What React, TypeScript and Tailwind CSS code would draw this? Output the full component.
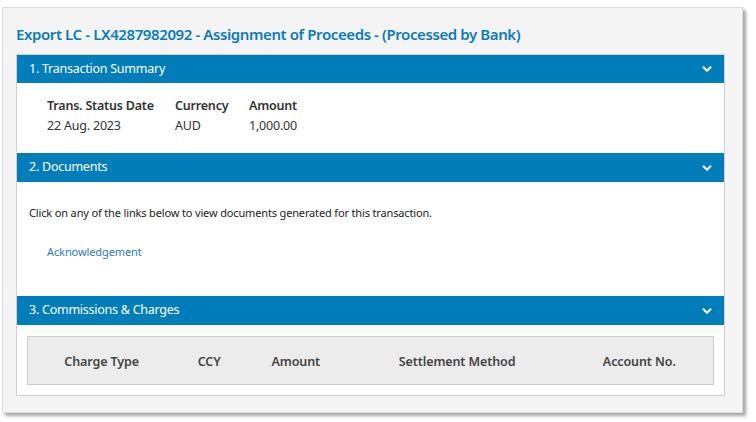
import { ChevronDown } from 'lucide-react';

const font = { fontFamily: '"Noto Sans", "Open Sans", sans-serif' };

function SectionHeader({ title, h = 'h-[29px]' }: { title: string; h?: string }) {
  return (
    <div className={`flex ${h} items-center justify-between bg-[#017dba] pl-[12px] pr-[10px] text-white`}>
      <span className="text-[12.5px] tracking-[-0.25px]">{title}</span>
      <ChevronDown size={14} strokeWidth={3.5} />
    </div>
  );
}

export default function App() {
  const charges = [
    { label: 'Charge Type', w: 'w-[148px]' },
    { label: 'CCY', w: 'w-[68px]' },
    { label: 'Amount', w: 'w-[106px]' },
    { label: 'Settlement Method', w: 'w-[218px]' },
    { label: 'Account No.', w: 'w-[148px]' },
  ];

  return (
    <div className="h-[422px] w-[756px] bg-white pl-[2px] pt-[7px] text-[#333]" style={font}>
      <div className="h-[406px] w-[741px] border border-[#dcdcdc] bg-[#f4f4f4] px-[13px] shadow-[3px_3px_3px_rgba(0,0,0,0.35)]">
        {/* Page title */}
        <h1 className="flex h-[46px] items-center pt-[6px] text-[15px] font-semibold tracking-[-0.4px] text-[#0a7bbb]">
          Export LC - LX4287982092 - Assignment of Proceeds - (Processed by Bank)
        </h1>

        <div className="w-[709px] border border-[#cfcfcf] bg-white">
          {/* 1. Transaction Summary */}
          <SectionHeader title="1. Transaction Summary" h="h-[28px]" />
          <div className="flex h-[70px] pl-[30px] pt-[14px] text-[12.5px] tracking-[-0.2px]">
            <div className="w-[128px]">
              <div className="font-semibold">Trans. Status Date</div>
              <div className="mt-[1px]">22 Aug. 2023</div>
            </div>
            <div className="w-[74px]">
              <div className="font-semibold">Currency</div>
              <div className="mt-[1px]">AUD</div>
            </div>
            <div>
              <div className="font-semibold">Amount</div>
              <div className="mt-[1px]">1,000.00</div>
            </div>
          </div>

          {/* 2. Documents */}
          <SectionHeader title="2. Documents" />
          <div className="h-[114px] pl-[12px] pt-[23px] text-[11px] text-[#222]">
            <p className="tracking-[-0.15px]">Click on any of the links below to view documents generated for this transaction.</p>
            <a className="mt-[22px] ml-[18px] block tracking-[-0.1px] text-[#2a7ab8]" href="#">
              Acknowledgement
            </a>
          </div>

          {/* 3. Commissions & Charges */}
          <SectionHeader title="3. Commissions & Charges" />
          <div className="pb-[10px] pl-[10px] pr-[10px] pt-[11px]">
            <div className="flex h-[49px] items-center border border-[#cccccc] bg-[#ececec] pt-[3px] text-[12.5px] font-semibold tracking-[-0.1px] text-[#444]">
              {charges.map((c) => (
                <div key={c.label} className={`${c.w} text-center`}>
                  {c.label}
                </div>
              ))}
            </div>
          </div>
        </div>
      </div>
    </div>
  );
}
